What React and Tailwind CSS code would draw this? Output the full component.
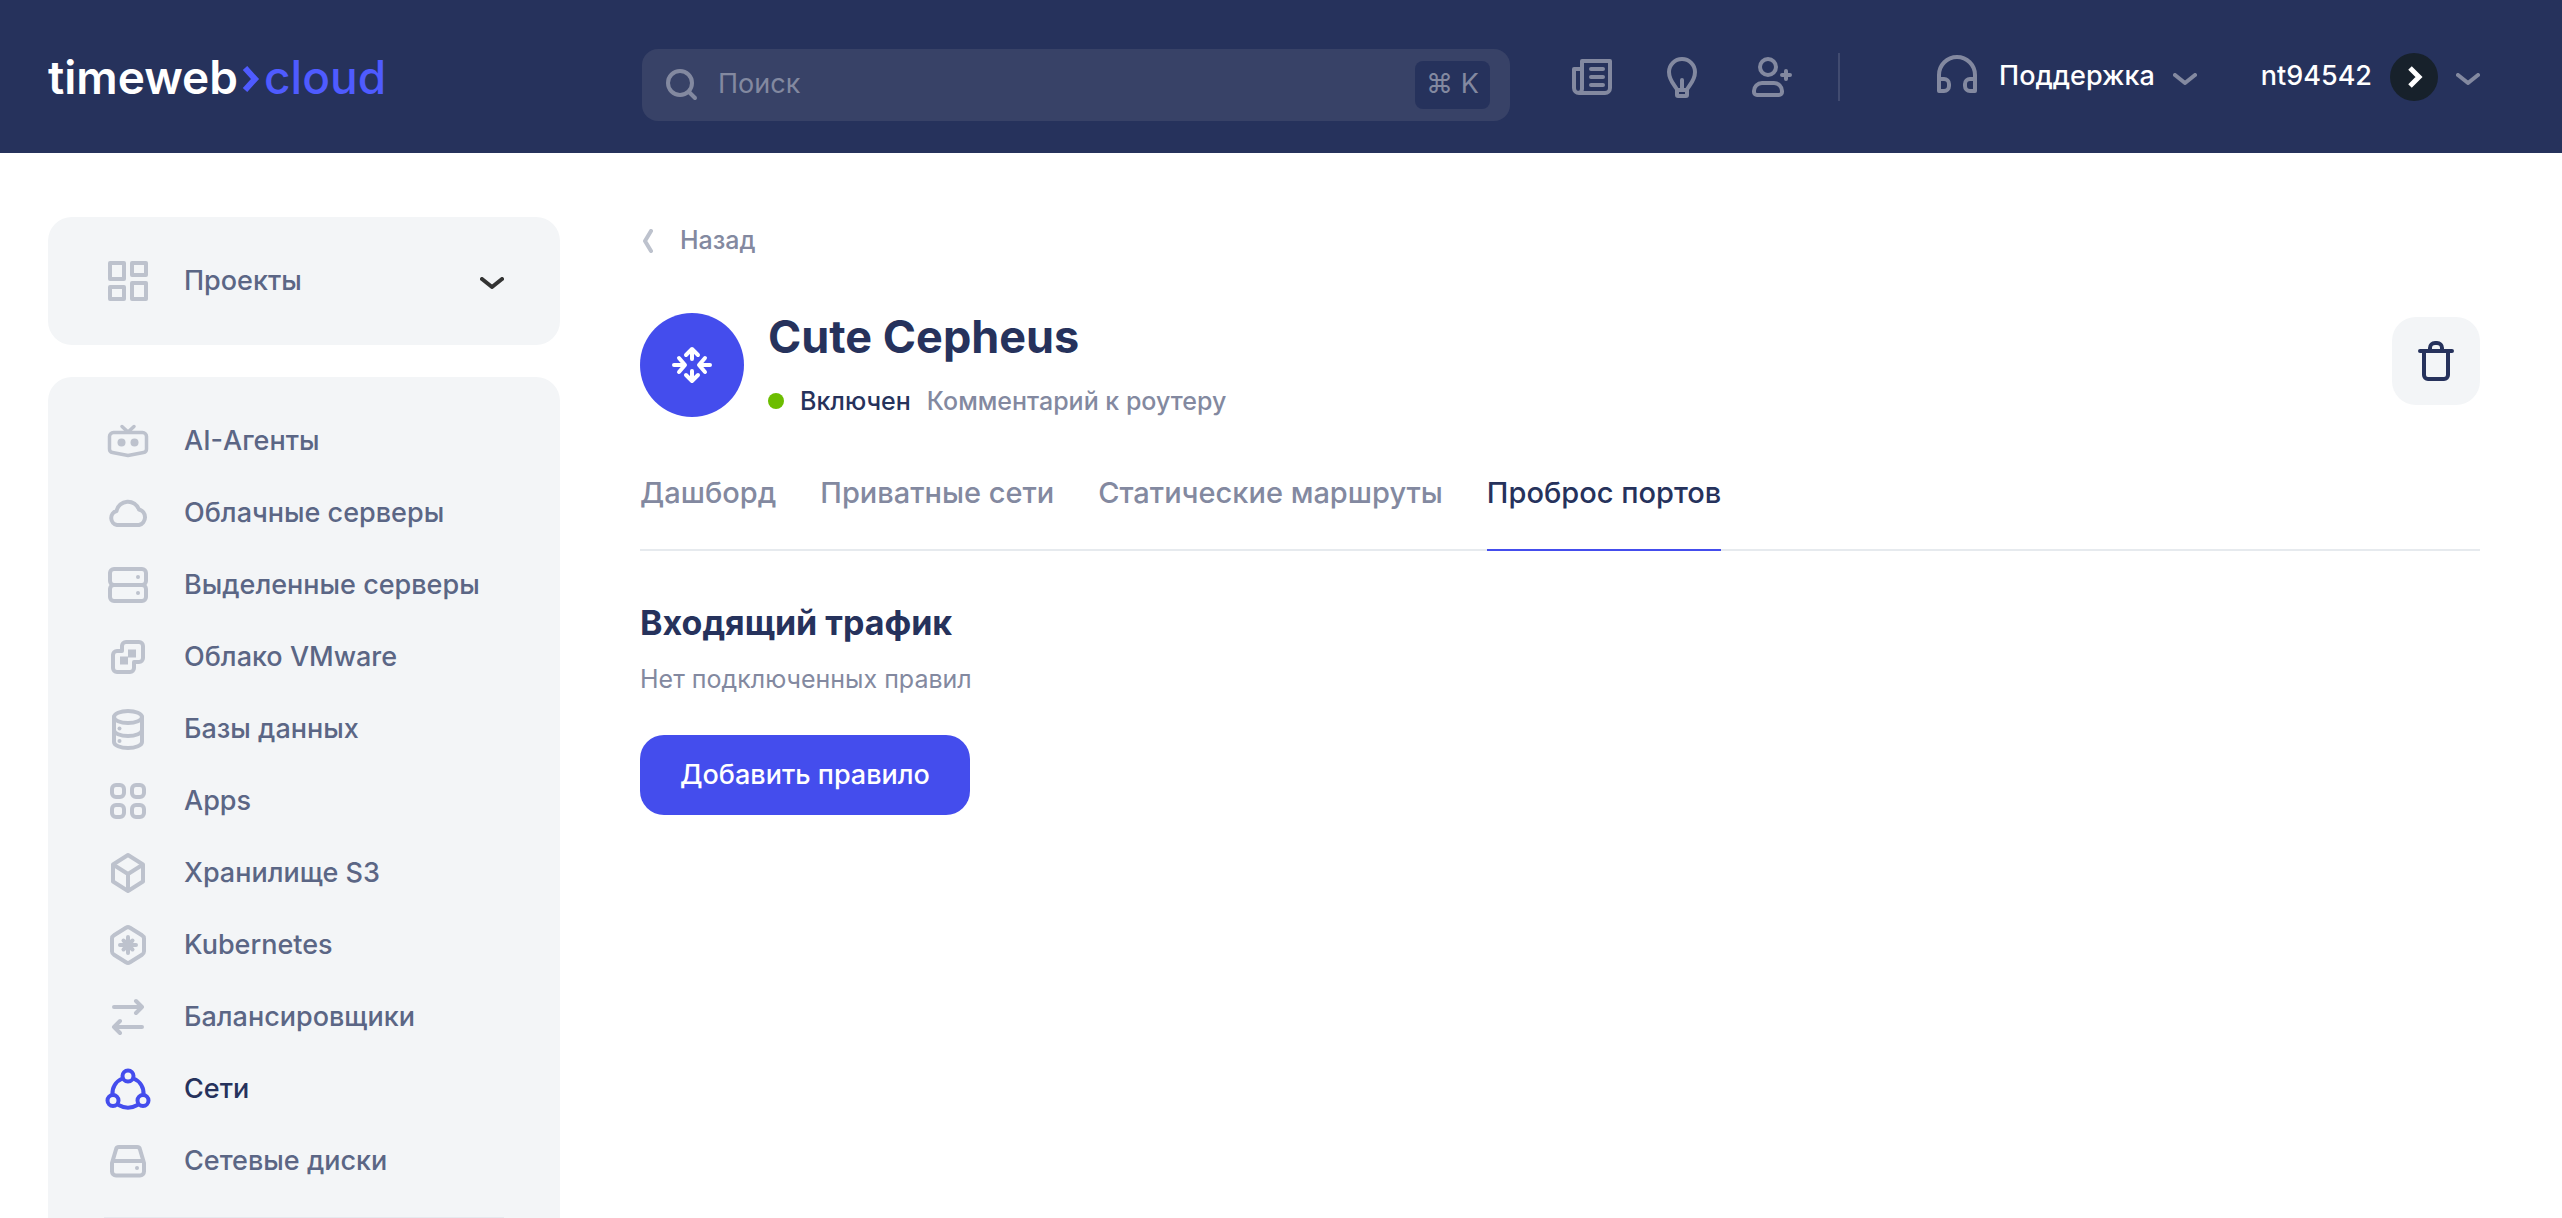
import { useState } from "react";

const Icon = ({ children, className = "", width = 4 }) => (
  <svg
    viewBox="0 0 48 48"
    className={`size-12 shrink-0 ${className}`}
    fill="none"
    stroke="currentColor"
    strokeWidth={width}
    strokeLinecap="round"
    strokeLinejoin="round"
    aria-hidden="true"
  >
    {children}
  </svg>
);

const Chevron = ({ className = "" }) => (
  <svg
    viewBox="0 0 24 12"
    className={`w-6 h-3 shrink-0 ${className}`}
    fill="none"
    stroke="currentColor"
    strokeWidth="4"
    strokeLinecap="round"
    strokeLinejoin="round"
    aria-hidden="true"
  >
    <path d="M2 2l10 8 10-8" />
  </svg>
);

const menuItems = [
  {
    label: "AI-Агенты",
    icon: (
      <Icon width={3.5}>
        <path d="M9.5 15.5h29a4 4 0 0 1 4 4V32a3.5 3.5 0 0 1-3 3.5L24 38.5 8.5 35.5a3.5 3.5 0 0 1-3-3.5V19.5a4 4 0 0 1 4-4zM18 9.5l6 5.5 6-5.5" />
        <circle cx="17.5" cy="25.5" r="4" fill="currentColor" stroke="none" />
        <circle cx="30.5" cy="25.5" r="4" fill="currentColor" stroke="none" />
      </Icon>
    ),
  },
  {
    label: "Облачные серверы",
    icon: (
      <Icon>
        <path d="M13 36a7.2 7.2 0 0 1-.5-14A11.7 11.7 0 0 1 35 20.5 8 8 0 0 1 35 36z" />
      </Icon>
    ),
  },
  {
    label: "Выделенные серверы",
    icon: (
      <Icon>
        <rect x="6" y="8" width="36" height="16" rx="4" />
        <rect x="6" y="24" width="36" height="16" rx="4" />
        <circle cx="34" cy="16" r="2" fill="currentColor" stroke="none" />
        <circle cx="34" cy="32" r="2" fill="currentColor" stroke="none" />
      </Icon>
    ),
  },
  {
    label: "Облако VMware",
    icon: (
      <Icon>
        <path d="M18 18v-5a4 4 0 0 1 4-4h13a4 4 0 0 1 4 4v12a4 4 0 0 1-4 4h-5v6a4 4 0 0 1-4 4H13a4 4 0 0 1-4-4V22a4 4 0 0 1 4-4z" />
        <path d="M24 16.5h8v8h-8zM16 23.5h8v8h-8z" fill="currentColor" stroke="none" />
      </Icon>
    ),
  },
  {
    label: "Базы данных",
    icon: (
      <Icon>
        <ellipse cx="24" cy="12" rx="14" ry="6" />
        <path d="M10 12v25c0 3.3 6.3 6 14 6s14-2.7 14-6V12M10 25c0 3.3 6.3 6 14 6s14-2.7 14-6" />
        <circle cx="15.5" cy="23.5" r="2" fill="currentColor" stroke="none" />
        <circle cx="15.5" cy="36" r="2" fill="currentColor" stroke="none" />
      </Icon>
    ),
  },
  {
    label: "Apps",
    icon: (
      <Icon>
        <rect x="8" y="8" width="12" height="12" rx="4" />
        <rect x="28" y="8" width="12" height="12" rx="4" />
        <rect x="8" y="28" width="12" height="12" rx="4" />
        <rect x="28" y="28" width="12" height="12" rx="4" />
      </Icon>
    ),
  },
  {
    label: "Хранилище S3",
    icon: (
      <Icon>
        <path d="M24 6l15 9.5v17L24 42 9 32.5v-17zM9 15.5L24 25l15-9.5M24 25v17" />
      </Icon>
    ),
  },
  {
    label: "Kubernetes",
    icon: (
      <Icon>
        <path d="M22 6.7a4 4 0 0 1 4 0l12 7.5a4 4 0 0 1 2 3.3v13a4 4 0 0 1-2 3.3l-12 7.5a4 4 0 0 1-4 0l-12-7.5a4 4 0 0 1-2-3.3v-13a4 4 0 0 1 2-3.3z" />
        <path d="M24 16v16M16 24h16M19.5 19.5l9 9M28.5 19.5l-9 9" />
      </Icon>
    ),
  },
  {
    label: "Балансировщики",
    icon: (
      <Icon>
        <path d="M10 14h28M32 8l6 6-6 6M38 34H10M16 28l-6 6 6 6" />
      </Icon>
    ),
  },
  {
    label: "Сети",
    icon: (
      <Icon>
        <circle cx="24" cy="11" r="5.5" />
        <circle cx="9" cy="35.5" r="5.5" />
        <circle cx="39" cy="35.5" r="5.5" />
        <path d="M18.5 13.5A16 16 0 0 0 8.500 30M29.5 13.5A16 16 0 0 1 39.5 30M14.5 40a19 19 0 0 0 19 0" />
      </Icon>
    ),
  },
  {
    label: "Сетевые диски",
    icon: (
      <Icon>
        <path d="M15 10h18a3 3 0 0 1 3 2.500L40 26v8.500a4 4 0 0 1-4 4H12a4 4 0 0 1-4-4V26l4-13.500A3 3 0 0 1 15 10zM9 24h30" />
        <circle cx="33" cy="31" r="2" fill="currentColor" stroke="none" />
      </Icon>
    ),
  },
];

const tabs = ["Дашборд", "Приватные сети", "Статические маршруты", "Проброс портов"];

const Header = () => {
  const [search, setSearch] = useState("");

  return (
    <header className="flex items-center h-[153px] pl-12 pr-[82px] bg-[#26325c] text-[27px] font-medium text-white">
      <a href="#" className="flex items-center w-[594px] shrink-0 text-[46px] leading-none">
        <span className="font-semibold">timeweb</span>
        <svg viewBox="0 0 18 26" className="w-[18px] h-[26px] ml-1 mt-1 mr-1" fill="none" stroke="#4f5bff" strokeWidth="6" aria-hidden="true">
          <path d="M3 2l10 11L3 24" />
        </svg>
        <span className="text-[#4f5bff]">cloud</span>
      </a>

      <label className="flex items-center w-[868px] h-18 mt-4 pl-4 pr-5 rounded-2xl bg-[#384267] text-[#8389a0] font-normal">
        <Icon>
          <circle cx="22" cy="22" r="12" />
          <path d="M31 31l6 6" />
        </Icon>
        <input
          type="text"
          aria-label="Поиск"
          placeholder="Поиск"
          className="flex-1 min-w-0 pl-3 bg-transparent outline-none placeholder:text-[#8389a0]"
          value={search}
          onChange={(e) => setSearch(e.target.value)}
        />
        <kbd className="flex items-center justify-center w-[75px] h-12 rounded-lg bg-[#26325c] font-[Inter,sans-serif] text-[27px]">
          ⌘ K
        </kbd>
      </label>

      <div className="flex items-center gap-[42px] ml-[58px] text-[#8389a0]">
        <button type="button" aria-label="Новости">
          <Icon>
            <path d="M14 16H6v19a5 5 0 0 0 5 5h26a5 5 0 0 0 5-5V8H14v28a4 4 0 0 1-4 4M23 16h12M23 24h12M23 32h12" />
          </Icon>
        </button>
        <button type="button" aria-label="Идеи">
          <Icon>
            <path d="M19 42v-5c0-3-8-8-8-18a13 13 0 0 1 26 0c0 10-8 15-8 18v5a1 1 0 0 1-1 1h-8a1 1 0 0 1-1-1zM24 27v9M19 37h10" />
          </Icon>
        </button>
        <button type="button" aria-label="Пригласить">
          <Icon>
            <circle cx="20" cy="14" r="8" />
            <path d="M14 30h12a8 8 0 0 1 8 8v1a3 3 0 0 1-3 3H9a3 3 0 0 1-3-3v-1a8 8 0 0 1 8-8zM38 18v8M34 22h8" />
          </Icon>
        </button>
        <span className="w-[2px] h-12 bg-[#414b70]" />
      </div>

      <div className="flex items-center gap-16 ml-auto">
        <button type="button" className="flex items-center gap-[18px]">
          <Icon className="text-[#8389a0]">
            <path d="M6 26v-4a18 18 0 0 1 36 0v16h-5a5 5 0 0 1-5-5v-2a5 5 0 0 1 5-5h5M6 26h5a5 5 0 0 1 5 5v2a5 5 0 0 1-5 5H6z" />
          </Icon>
          Поддержка
          <Chevron className="mt-1 text-[#8389a0]" />
        </button>
        <button type="button" className="flex items-center gap-[18px]">
          nt94542
          <span className="size-12 rounded-full bg-[#17212b]">
            <svg viewBox="0 0 48 48" className="size-12" fill="none" stroke="#fff" strokeWidth="5" aria-hidden="true">
              <path d="M20 15l9 9-9 9" />
            </svg>
          </span>
          <Chevron className="mt-1 text-[#8389a0]" />
        </button>
      </div>
    </header>
  );
};

const Sidebar = () => (
  <aside className="flex flex-col gap-8 w-[512px] shrink-0 text-[27px] font-medium text-[#5b6685]">
    <button type="button" className="flex items-center gap-8 h-32 px-14 rounded-3xl bg-[#f3f5f7]">
      <Icon className="text-[#bdc2cd]">
        <rect x="6" y="6" width="14" height="16" />
        <rect x="28" y="6" width="14" height="12" />
        <rect x="6" y="30" width="14" height="12" />
        <rect x="28" y="26" width="14" height="16" />
      </Icon>
      Проекты
      <Chevron className="ml-auto mt-1 text-[#333333]" />
    </button>

    <nav className="flex-1 px-14 pt-7 rounded-t-3xl bg-[#f3f5f7]">
      <ul className="pb-5 border-b border-[#e6e9ee]">
        {menuItems.map(({ label, icon }) => {
          const active = label === "Сети";
          return (
            <li key={label}>
              <a href="#" className={`flex items-center gap-8 h-18 ${active ? "text-[#26325c]" : ""}`}>
                <span className={active ? "text-[#444ded]" : "text-[#bdc2cd]"}>{icon}</span>
                {label}
              </a>
            </li>
          );
        })}
      </ul>
    </nav>
  </aside>
);

const App = () => {
  const [activeTab, setActiveTab] = useState("Проброс портов");

  return (
    <div className="min-h-screen bg-white font-[Inter,sans-serif] text-[#26325c]">
      <Header />

      <div className="flex gap-20 pt-16 pl-12 pr-[82px]">
        <Sidebar />

        <main className="flex-1 min-w-0">
          <a href="#" className="inline-flex items-center h-12 gap-[27px] text-[25px] font-medium text-[#8389a0]">
            <svg viewBox="0 0 13 24" className="w-[13px] h-6" fill="none" stroke="#bdc2cd" strokeWidth="4" strokeLinecap="round" strokeLinejoin="round" aria-hidden="true">
              <path d="M11 2L5 12l6 10" />
            </svg>
            Назад
          </a>

          <div className="flex gap-6 mt-12">
            <div className="flex items-center justify-center size-[104px] shrink-0 rounded-full bg-[#444ded] text-white">
              <Icon>
                <path d="M6 24h10M11 17l6 7-6 7M42 24H32M37 17l-6 7 6 7M24 18V8M18 14l6-6 6 6M24 30v10M18 34l6 6 6-6" />
              </Icon>
            </div>
            <div>
              <h1 className="text-[45px] leading-[48px] font-bold">Cute Cepheus</h1>
              <div className="flex items-center gap-4 mt-6 text-[25px] leading-8 font-medium">
                <span className="size-4 rounded-full bg-[#6cbd00]" />
                <span>Включен</span>
                <span className="text-[#8389a0]">Комментарий к роутеру</span>
              </div>
            </div>
            <button
              type="button"
              aria-label="Удалить"
              className="flex items-center justify-center size-22 mt-1 ml-auto rounded-3xl bg-[#f3f5f7]"
            >
              <Icon>
                <path d="M8 14h32M12 14v24a4 4 0 0 0 4 4h16a4 4 0 0 0 4-4V14M18 14v-3a5 5 0 0 1 5-5h2a5 5 0 0 1 5 5v3" />
              </Icon>
            </button>
          </div>

          <div role="tablist" className="flex gap-11 mt-14 text-[29px] leading-10 font-medium shadow-[inset_0_-2px_0_#e6eaee]">
            {tabs.map((tab) => (
              <button
                key={tab}
                type="button"
                role="tab"
                aria-selected={tab === activeTab}
                onClick={() => setActiveTab(tab)}
                className={`pb-9 border-b-2 ${
                  tab === activeTab ? "border-[#444ded]" : "border-transparent text-[#8389a0]"
                }`}
              >
                {tab}
              </button>
            ))}
          </div>

          <section>
            <h2 className="mt-12 text-[34px] leading-[48px] font-bold">Входящий трафик</h2>
            <p className="mt-4 text-[25px] leading-8 text-[#8389a0]">Нет подключенных правил</p>
            <button type="button" className="h-20 px-10 mt-10 rounded-3xl bg-[#444ded] text-[27px] font-medium text-white">
              Добавить правило
            </button>
          </section>
        </main>
      </div>
    </div>
  );
};

export default App;
